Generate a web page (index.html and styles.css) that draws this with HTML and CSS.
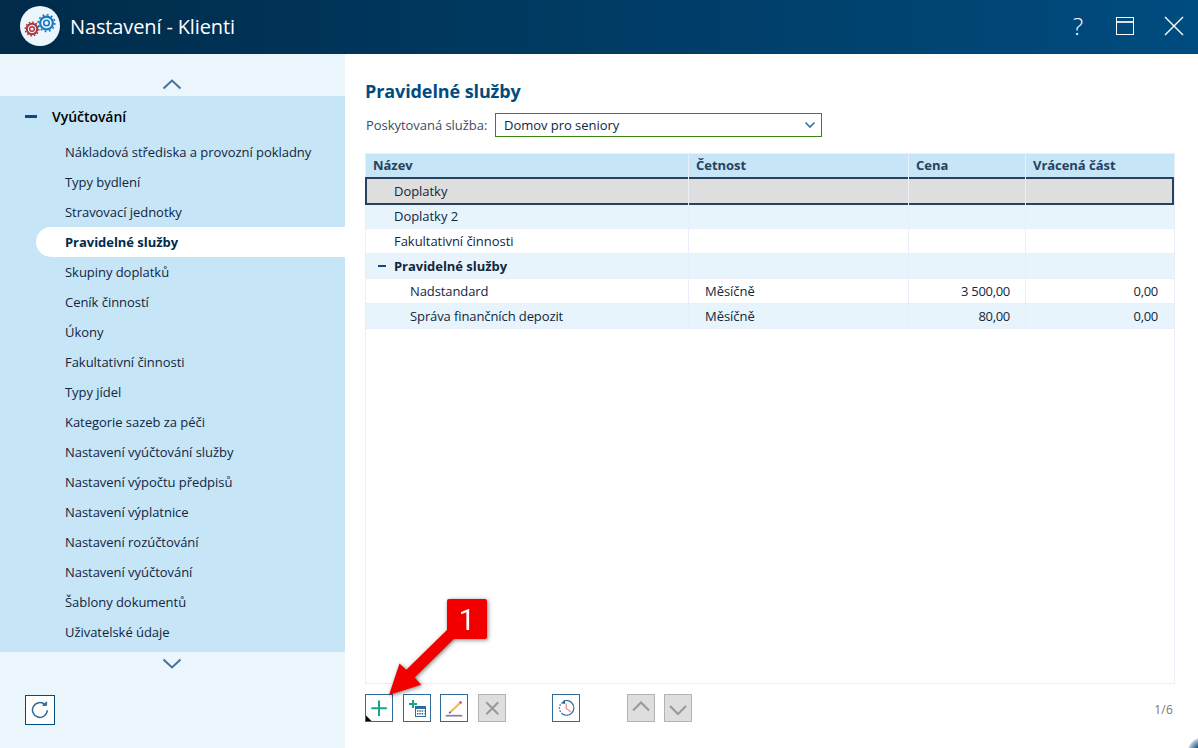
FILE: index.html
```html
<!DOCTYPE html>
<html lang="cs">
<head>
  <meta charset="utf-8">
  <title>Nastavení - Klienti</title>
  <link rel="stylesheet" href="styles.css">
</head>
<body>
  <header class="titlebar">
    <svg class="logo" width="40" height="40" viewBox="0 0 40 40">
      <circle cx="20" cy="20" r="20" fill="#eaf5fc"/>
      <g fill="none" stroke="#b0303a">
        <circle cx="12" cy="23" r="5.2" stroke-width="2"/>
        <circle cx="12" cy="23" r="6.8" stroke-width="1.4" stroke-dasharray="1.6 1.96"/>
        <circle cx="12" cy="23" r="2.3" stroke-width="1.4"/>
      </g>
      <g fill="none" stroke="#1579c0">
        <circle cx="26.5" cy="17" r="6.4" stroke-width="2.2"/>
        <circle cx="26.5" cy="17" r="8.3" stroke-width="1.7" stroke-dasharray="1.8 2.55"/>
        <circle cx="26.5" cy="17" r="2.800" stroke-width="1.600"/>
      </g>
    </svg>
    <h1>Nastavení - Klienti</h1>
    <div class="window-buttons">
      <span class="help">?</span>
      <svg width="18" height="18" viewBox="0 0 18 18" fill="none" stroke="#fff">
        <rect x=".5" y=".5" width="17" height="17"/>
        <path d="M1 5h16" stroke-width="2" opacity=".85"/>
      </svg>
      <svg width="20" height="20" viewBox="0 0 20 20" fill="none" stroke="#fff" stroke-width="1.4">
        <path d="M1 1l18 18M19 1L1 19"/>
      </svg>
    </div>
  </header>

  <div class="content">
    <nav class="sidebar">
      <div class="scroll scroll-up">
        <svg width="20" height="11" viewBox="0 0 20 11"><path d="M1.5 9.5L10 1.5l8.500 8"/></svg>
      </div>
      <div class="menu">
        <div class="menu-title"><i class="minus"></i>Vyúčtování</div>
        <ul>
          <li>Nákladová střediska a provozní pokladny</li>
          <li>Typy bydlení</li>
          <li>Stravovací jednotky</li>
          <li class="active">Pravidelné služby</li>
          <li>Skupiny doplatků</li>
          <li>Ceník činností</li>
          <li>Úkony</li>
          <li>Fakultativní činnosti</li>
          <li>Typy jídel</li>
          <li>Kategorie sazeb za péči</li>
          <li>Nastavení vyúčtování služby</li>
          <li>Nastavení výpočtu předpisů</li>
          <li>Nastavení výplatnice</li>
          <li>Nastavení rozúčtování</li>
          <li>Nastavení vyúčtování</li>
          <li>Šablony dokumentů</li>
          <li>Uživatelské údaje</li>
        </ul>
      </div>
      <div class="scroll scroll-down">
        <svg width="20" height="11" viewBox="0 0 20 11"><path d="M1.500 1.500L10 9.500l8.500-8"/></svg>
      </div>
      <button class="refresh">
        <svg width="18" height="18" viewBox="0 0 18 18" fill="none" stroke="#2f6a98" stroke-width="1.5">
          <path d="M16.300 9.300A7.400 7.400 0 1 1 14 3.600"/>
          <path d="M11.500 4.400h4.200V.8z" fill="#2f6a98" stroke-width=".8"/>
        </svg>
      </button>
    </nav>

    <main class="main">
      <h2>Pravidelné služby</h2>
      <div class="filter">
        <label>Poskytovaná služba:</label>
        <div class="select">
          Domov pro seniory
          <svg width="12" height="8" viewBox="0 0 12 8"><path d="M1.500 1.500L6 6l4.500-4.500"/></svg>
        </div>
      </div>

      <div class="table">
        <div class="row head"><div>Název</div><div>Četnost</div><div>Cena</div><div>Vrácená část</div></div>
        <div class="row selected"><div>Doplatky</div><div></div><div></div><div></div></div>
        <div class="row even first"><div>Doplatky 2</div><div></div><div></div><div></div></div>
        <div class="row"><div>Fakultativní činnosti</div><div></div><div></div><div></div></div>
        <div class="row even group"><div><i class="minus"></i>Pravidelné služby</div><div></div><div></div><div></div></div>
        <div class="row child"><div>Nadstandard</div><div>Měsíčně</div><div>3 500,00</div><div>0,00</div></div>
        <div class="row child even"><div>Správa finančních depozit</div><div>Měsíčně</div><div>80,00</div><div>0,00</div></div>
      </div>

      <div class="toolbar">
        <button class="tool">
          <svg width="26" height="26" viewBox="0 0 26 26">
            <path d="M13 5.500v15.500M5.300 13.200h15.500" stroke="#17a589" stroke-width="2" fill="none"/>
            <path d="M0 20.500l5.500 5.500H0z" fill="#000"/>
          </svg>
        </button>
        <button class="tool">
          <svg width="26" height="26" viewBox="0 0 26 26" fill="none">
            <path d="M9 5v8M5 9h8" stroke="#17a589" stroke-width="2"/>
            <rect x="11.500" y="11.500" width="10" height="10" stroke="#2f6a98"/>
            <path d="M11 12.700h11" stroke="#2f6a98" stroke-width="2.500"/>
            <path d="M13 16h7.500M13 18.800h7.500" stroke="#2f6a98" stroke-width="1.500" stroke-dasharray="1.500 .8"/>
          </svg>
        </button>
        <button class="tool">
          <svg width="26" height="26" viewBox="0 0 26 26" fill="none">
            <path d="M9.500 17L19 8" stroke="#f5bc52" stroke-width="2.400"/>
            <path d="M18.700 8.300l1.700-1.600" stroke="#e0565b" stroke-width="2.600"/>
            <path d="M8 18.400l1.700-1.700" stroke="#555" stroke-width="1.300"/>
            <path d="M4.700 20.700h16.600" stroke="#8b7a99" stroke-width="1.700"/>
          </svg>
        </button>
        <button class="tool disabled">
          <svg width="26" height="26" viewBox="0 0 26 26"><path d="M7.300 7.300l12 12M19.300 7.300l-12 12"/></svg>
        </button>
        <button class="tool gap">
          <svg width="26" height="26" viewBox="0 0 26 26" fill="none">
            <path d="M10 6.500A7.300 7.300 0 1 1 9.500 19" stroke="#2f6a98" stroke-width="1.300"/>
            <path d="M9.500 19A7.300 7.300 0 0 1 8.500 8" stroke="#2f6a98" stroke-width="1.300" stroke-dasharray="1.500 1.500"/>
            <path d="M7.800 8.300l4.200-3v3.700z" fill="#2f6a98"/>
            <path d="M13.200 8.500v5l4.500 3.300" stroke="#f08a8a" stroke-width="1.300"/>
          </svg>
        </button>
        <button class="tool disabled gap">
          <svg width="26" height="26" viewBox="0 0 26 26"><path d="M5 15.500l8-8 8 8"/></svg>
        </button>
        <button class="tool disabled">
          <svg width="26" height="26" viewBox="0 0 26 26"><path d="M5 11l8 8 8-8"/></svg>
        </button>
        <span class="counter">1/6</span>
      </div>
    </main>
  </div>

  <svg class="callout" width="110" height="110" viewBox="0 0 110 110">
    <path d="M4 105l10.500-31.500 6.800 6.300L64 38l10 6-44.300 43.500 6.500 7.300z"/>
    <rect x="62" y="9" width="40" height="40" rx="2"/>
    <text x="81.800" y="40" text-anchor="middle">1</text>
  </svg>
  <div class="resize-grip"></div>
</body>
</html>
```
FILE: styles.css
```css
* {
  box-sizing: border-box;
}

body {
  margin: 0;
  width: 1198px;
  height: 748px;
  overflow: hidden;
  position: relative;
  display: flex;
  flex-direction: column;
  background: #fff;
  color: #12263f;
  font-family: "Open Sans", "Noto Sans", sans-serif;
  font-size: 13px;
  letter-spacing: -0.04px;
}

h1, h2, ul {
  margin: 0;
  padding: 0;
  list-style: none;
}

svg {
  display: block;
}

button {
  padding: 0;
  display: flex;
  align-items: center;
  justify-content: center;
}

.titlebar {
  height: 54px;
  display: flex;
  align-items: center;
  padding: 0 14px 2px 20px;
  background: linear-gradient(90deg, #002b49, #004c7f);
  color: #fff;
}

.titlebar h1 {
  margin-left: 10px;
  font-size: 20px;
  font-weight: 400;
  letter-spacing: -0.13px;
}

.window-buttons {
  margin-left: auto;
  display: flex;
  align-items: center;
}

.window-buttons svg {
  margin-left: 30px;
}

.help {
  margin-right: 3px;
  font-size: 24px;
  font-weight: 300;
  line-height: 24px;
}

.content {
  flex: 1;
  display: flex;
}

.sidebar {
  width: 345px;
  background: #eaf5fc;
}

.scroll {
  display: flex;
  padding-left: 162px;
}

.scroll-up {
  height: 42px;
  padding-top: 25px;
}

.scroll-down {
  height: 43px;
  padding-top: 6px;
}

.scroll svg {
  fill: none;
  stroke: #45719f;
  stroke-width: 2;
}

.menu {
  height: 556px;
  background: #c6e5f6;
}

.menu-title {
  height: 41px;
  padding-left: 25px;
  display: flex;
  align-items: center;
  color: #000;
  font-size: 14px;
  font-weight: 600;
}

.minus {
  width: 12px;
  height: 3px;
  margin-right: 15px;
  background: #10497f;
}

.menu li {
  height: 30px;
  margin-left: 36px;
  padding-left: 29px;
  line-height: 30px;
}

.menu .active {
  border-radius: 15px 0 0 15px;
  background: #fff;
  color: #002b49;
  font-weight: 700;
}

.refresh {
  width: 30px;
  height: 30px;
  margin-left: 25px;
  border: 1px solid #004c7f;
  background: #fff;
}

.main {
  flex: 1;
  padding: 25px 23px 0 20px;
}

.main h2 {
  height: 34px;
  color: #004c7f;
  font-size: 18px;
  line-height: 25px;
  letter-spacing: -0.1px;
}

.filter {
  display: flex;
  align-items: center;
  height: 24px;
  color: #3a4d66;
}

.filter label {
  width: 130px;
  padding-left: 1px;
}

.select {
  width: 327px;
  height: 24px;
  padding: 0 5px 0 8px;
  display: flex;
  align-items: center;
  justify-content: space-between;
  border: 1px solid #3e8514;
  color: #12263f;
}

.select svg {
  fill: none;
  stroke: #45719f;
  stroke-width: 1.7;
}

.table {
  width: 810px;
  height: 531px;
  margin-top: 16px;
  border: 1px solid #e9eefa;
}

.row {
  height: 25px;
  display: grid;
  grid-template-columns: 323px 220px 117px 148px;
  border-bottom: 1px solid #e9eefa;
  line-height: 24px;
}

.row > div {
  display: flex;
  align-items: center;
  border-right: 1px solid #e9eefa;
}

.row > div:first-child {
  padding-left: 28px;
}

.row > div:last-child {
  border-right: none;
}

.even {
  background: #e7f4fb;
}

.first {
  height: 24px;
  line-height: 22px;
}

.first > div {
  padding-bottom: 1px;
}

.head {
  height: 23px;
  border: none;
  background: #c6e5f6;
  color: #27415f;
  font-weight: 700;
  line-height: 22px;
}

.head > div,
.head > div:first-child {
  padding-left: 7px;
  padding-bottom: 1px;
}

/* selected row overlaps the left table border */
.selected {
  height: 28px;
  margin-left: -1px;
  grid-template-columns: 324px 220px 117px 148px;
  border: none;
  background: #dedede;
}

.selected > div {
  box-shadow: inset 0 2px #27415f, inset 0 -2px #27415f;
}

.selected > div:first-child {
  padding-left: 27px;
  border-left: 2px solid #27415f;
}

.selected > div:last-child {
  border-right: 2px solid #27415f;
}

.group {
  font-weight: 700;
}

.group > div:first-child {
  padding-left: 12px;
}

.group .minus {
  width: 8px;
  height: 2px;
  margin-right: 8px;
}

.child > div:first-child {
  padding-left: 44px;
  letter-spacing: -0.1px;
}

.child > div:nth-child(2) {
  padding-left: 16px;
}

.child > div:nth-child(n+3) {
  justify-content: flex-end;
  padding-right: 15px;
  letter-spacing: -0.3px;
}

.child > div:last-child {
  padding-right: 16px;
}

.toolbar {
  display: flex;
  gap: 9.5px;
  margin-top: 10px;
}

.tool {
  width: 28px;
  height: 28px;
  border: 1px solid #2f6a98;
  background: #fff;
}

.tool.gap {
  margin-left: 37px;
}

.tool.disabled {
  border-color: #b3b3b3;
  background: #dedede;
}

.disabled svg {
  fill: none;
  stroke: #999;
  stroke-width: 2;
}

.counter {
  margin: 7px 2px 0 auto;
  color: #777;
  font-size: 12px;
  letter-spacing: 0.2px;
}

.callout {
  position: absolute;
  left: 385px;
  top: 590px;
  filter: drop-shadow(1px 1px 2px rgba(0, 0, 0, 0.5));
  fill: #f20000;
}

.callout text {
  fill: #fff;
  font-family: Roboto, sans-serif;
  font-size: 29px;
}

.resize-grip {
  position: absolute;
  left: 1188px;
  top: 738px;
  width: 28px;
  height: 28px;
  border-radius: 50%;
  background: radial-gradient(circle, #00406f 25%, #b9cddb 68%);
}
```
